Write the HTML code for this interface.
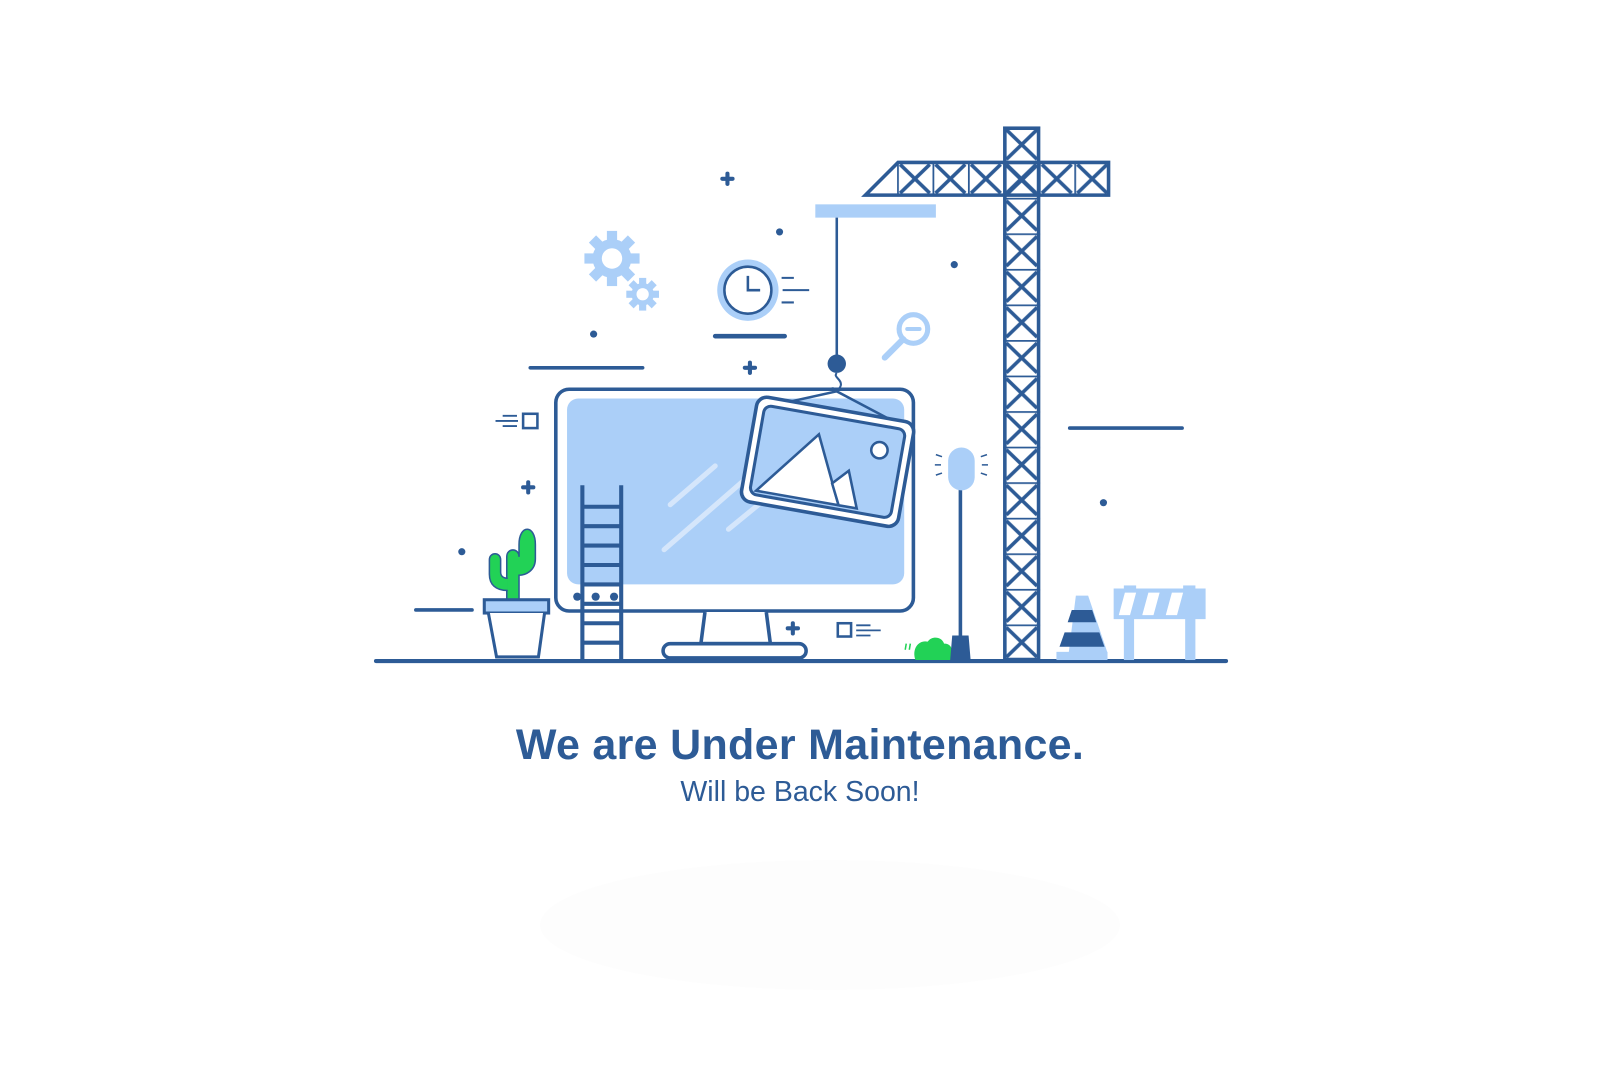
<!DOCTYPE html>
<html><head><meta charset="utf-8"><style>
html,body{margin:0;padding:0;background:#fff;}
body{width:1600px;height:1066px;position:relative;overflow:hidden;font-family:"Liberation Sans",sans-serif;}
.t1{position:absolute;left:0;width:1600px;top:721px;text-align:center;font-weight:bold;font-size:43px;color:#2d5b96;letter-spacing:0.3px;}
.t2{position:absolute;left:0;width:1600px;top:776px;text-align:center;font-size:28.5px;color:#2d5b96;}
svg{position:absolute;left:0;top:0;}
</style></head><body>
<svg width="1600" height="1066" viewBox="0 0 1600 1066">
<defs>
<pattern id="mast" x="982" y="124" width="36" height="34.8" patternUnits="userSpaceOnUse">
<path d="M0 0H36M3 3L33 32M33 3L3 32" stroke="#2d5b96" stroke-width="3.5" fill="none"/>
</pattern>
<pattern id="jib" x="878" y="158" width="34.7" height="34" patternUnits="userSpaceOnUse">
<path d="M0 0V34M3 3L32 31M32 3L3 31" stroke="#2d5b96" stroke-width="3.5" fill="none"/>
</pattern>
</defs>
<ellipse cx="830" cy="925" rx="290" ry="65" fill="#fdfdfd"/>
<g transform="scale(1.0217)">
<g stroke="#2d5b96" stroke-linecap="round" fill="none" stroke-width="3.5">
<line x1="368" y1="647" x2="1200" y2="647" stroke-width="4"/>
<line x1="519" y1="360" x2="629" y2="360"/>
<line x1="700" y1="329" x2="768" y2="329" stroke-width="4.5"/>
<line x1="407" y1="597" x2="462" y2="597"/>
<line x1="1047" y1="419" x2="1157" y2="419"/>
</g>
<g fill="#2d5b96">
<circle cx="581" cy="327" r="3.5"/><circle cx="763" cy="227" r="3.5"/><circle cx="934" cy="259" r="3.5"/><circle cx="1080" cy="492" r="3.5"/><circle cx="452" cy="540" r="3.5"/><circle cx="719" cy="387" r="2"/>
</g>
<g stroke="#2d5b96" stroke-width="4" stroke-linecap="round">
<path d="M712 170v10M707 175h10"/><path d="M734 355v10M729 360h10"/><path d="M517 472v10M512 477h10"/><path d="M776 610v10M771 615h10"/>
</g>
<rect x="982" y="124" width="36" height="522" fill="url(#mast)"/>
<rect x="983.5" y="125.5" width="33" height="520" fill="none" stroke="#2d5b96" stroke-width="3.5"/>
<rect x="878" y="158" width="208" height="34" fill="url(#jib)"/>
<path d="M847 191L879 159H1085V191Z" fill="none" stroke="#2d5b96" stroke-width="3.5"/>
<rect x="798" y="200" width="118" height="13" fill="#abcff8"/>
<line x1="819" y1="213" x2="819" y2="352" stroke="#2d5b96" stroke-width="2.5"/>
<circle cx="819" cy="356" r="9" fill="#2d5b96"/>
<path d="M819 365c-4 4 5 6 4 12c-1 5-8 6-8 2" fill="none" stroke="#2d5b96" stroke-width="2"/>
<g fill="#abcff8">
<circle cx="599" cy="253" r="19"/>
<g transform="translate(599 253)"><rect x="-5" y="-27" width="10" height="54"/><rect x="-27" y="-5" width="54" height="10"/><rect x="-5" y="-27" width="10" height="54" transform="rotate(45)"/><rect x="-5" y="-27" width="10" height="54" transform="rotate(-45)"/></g>
<circle cx="629" cy="288" r="11"/>
<g transform="translate(629 288)"><rect x="-3.5" y="-16" width="7" height="32"/><rect x="-16" y="-3.5" width="32" height="7"/><rect x="-3.5" y="-16" width="7" height="32" transform="rotate(45)"/><rect x="-3.5" y="-16" width="7" height="32" transform="rotate(-45)"/></g>
</g>
<circle cx="599" cy="253" r="10" fill="#fff"/><circle cx="629" cy="288" r="6" fill="#fff"/>
<circle cx="732" cy="284" r="30" fill="#abcff8"/>
<circle cx="732" cy="284" r="23" fill="#fff" stroke="#2d5b96" stroke-width="2.5"/>
<path d="M732 270v14h12" fill="none" stroke="#2d5b96" stroke-width="2.5"/>
<g stroke="#2d5b96" stroke-width="2"><path d="M765 272h12M766 284h26M765 296h12"/></g>
<circle cx="894" cy="322" r="14" fill="none" stroke="#abcff8" stroke-width="5"/>
<path d="M884 332L866 350" stroke="#abcff8" stroke-width="6" stroke-linecap="round"/>
<path d="M888 322h12" stroke="#abcff8" stroke-width="4" stroke-linecap="round"/>
<rect x="512" y="405" width="14" height="14" fill="none" stroke="#2d5b96" stroke-width="2.5"/>
<path d="M485 412h22M492 407h14M492 417h14" stroke="#2d5b96" stroke-width="1.8"/>
<rect x="820" y="610" width="13" height="13" fill="none" stroke="#2d5b96" stroke-width="2.5"/>
<path d="M838 612h14M838 617h24M838 622h14" stroke="#2d5b96" stroke-width="1.8"/>
<rect x="544" y="381" width="350" height="217" rx="13" fill="#fff" stroke="#2d5b96" stroke-width="3.5"/>
<rect x="555" y="390" width="330" height="182" rx="11" fill="#abcff8"/>
<g stroke="#d5e6fb" stroke-width="5" stroke-linecap="round"><path d="M656 494L700 456M650 538L733 466M713 518L757 482"/></g>
<path d="M690 599L686 630H754L750 599" fill="#fff" stroke="#2d5b96" stroke-width="3.5"/>
<rect x="649" y="630" width="140" height="14" rx="7" fill="#fff" stroke="#2d5b96" stroke-width="3.5"/>
<path d="M760 396L819 383L870 410" fill="none" stroke="#2d5b96" stroke-width="2.5"/>
<g transform="translate(810 452) rotate(10)">
<rect x="-78" y="-52" width="156" height="104" rx="10" fill="#fff" stroke="#2d5b96" stroke-width="3.5"/>
<rect x="-70" y="-44" width="140" height="88" rx="7" fill="#abcff8" stroke="#2d5b96" stroke-width="3"/>
<path d="M-64 40L-13 -25L18 40Z" fill="#fff" stroke="#2d5b96" stroke-width="2.5"/>
<path d="M8 20L22 5L36 40H18Z" fill="#fff" stroke="#2d5b96" stroke-width="2.5"/>
<circle cx="48" cy="-20" r="8" fill="#fff" stroke="#2d5b96" stroke-width="2.5"/>
</g>
<g stroke="#2d5b96" stroke-width="4">
<path d="M570 475V646M608 475V646"/>
<path d="M570 496H608M570 515H608M570 534H608M570 553H608M570 572H608M570 591H608M570 610H608M570 629H608"/>
</g>
<g fill="#2d5b96"><circle cx="565" cy="584" r="4"/><circle cx="583" cy="584" r="4"/><circle cx="601" cy="584" r="4"/></g>
<path d="M496 590V545c0-9 12-9 12 0v-12c0-20 16-20 16 0v14c0 12-10 16-16 16v27z" fill="#22d256" stroke="#2d5b96" stroke-width="1.5"/>
<path d="M497 578c-12 0-18-6-18-16v-14c0-8 11-8 11 0v12c0 4 3 6 7 6" fill="#22d256" stroke="#2d5b96" stroke-width="1.5"/>
<rect x="474" y="587" width="63" height="13" fill="#abcff8" stroke="#2d5b96" stroke-width="3"/>
<path d="M478 600L486 643H527L533 600" fill="#fff" stroke="#2d5b96" stroke-width="3"/>
<line x1="940" y1="478" x2="940" y2="625" stroke="#2d5b96" stroke-width="3.5"/>
<rect x="928" y="438" width="26" height="42" rx="13" fill="#abcff8"/>
<g stroke="#2d5b96" stroke-width="1.5"><path d="M916 445l6 2M915 455h6M916 465l6-2M966 445l-6 2M967 455h-6M966 465l-6-2"/></g>
<path d="M896 646c-4-12 4-20 12-18c4-6 14-5 16 2c6-1 10 6 9 16z" fill="#22d256"/>
<path d="M886 636l1-6M890 636l1-6" stroke="#22d256" stroke-width="1.5"/>
<path d="M932 622h16l2 24h-20z" fill="#2d5b96"/>
<path d="M1053 583h12l19 56h-38z" fill="#abcff8"/>
<path d="M1049 597h20l4 12h-28zM1042 619h34l5 14h-44z" fill="#2d5b96"/>
<rect x="1034" y="638" width="50" height="8" fill="#abcff8"/>
<g fill="#abcff8">
<rect x="1100" y="604" width="10" height="42"/><rect x="1160" y="604" width="10" height="42"/>
<rect x="1100" y="573" width="12" height="5"/><rect x="1158" y="573" width="12" height="5"/>
<path d="M1090 576h90v30h-90z"/>
</g>
<g fill="#fff"><path d="M1101 580h11l-6 22h-11zM1124 580h11l-6 22h-11zM1147 580h11l-6 22h-11z"/></g>
</g>
</svg>
<div class="t1">We are Under Maintenance.</div>
<div class="t2">Will be Back Soon!</div>
</body></html>
